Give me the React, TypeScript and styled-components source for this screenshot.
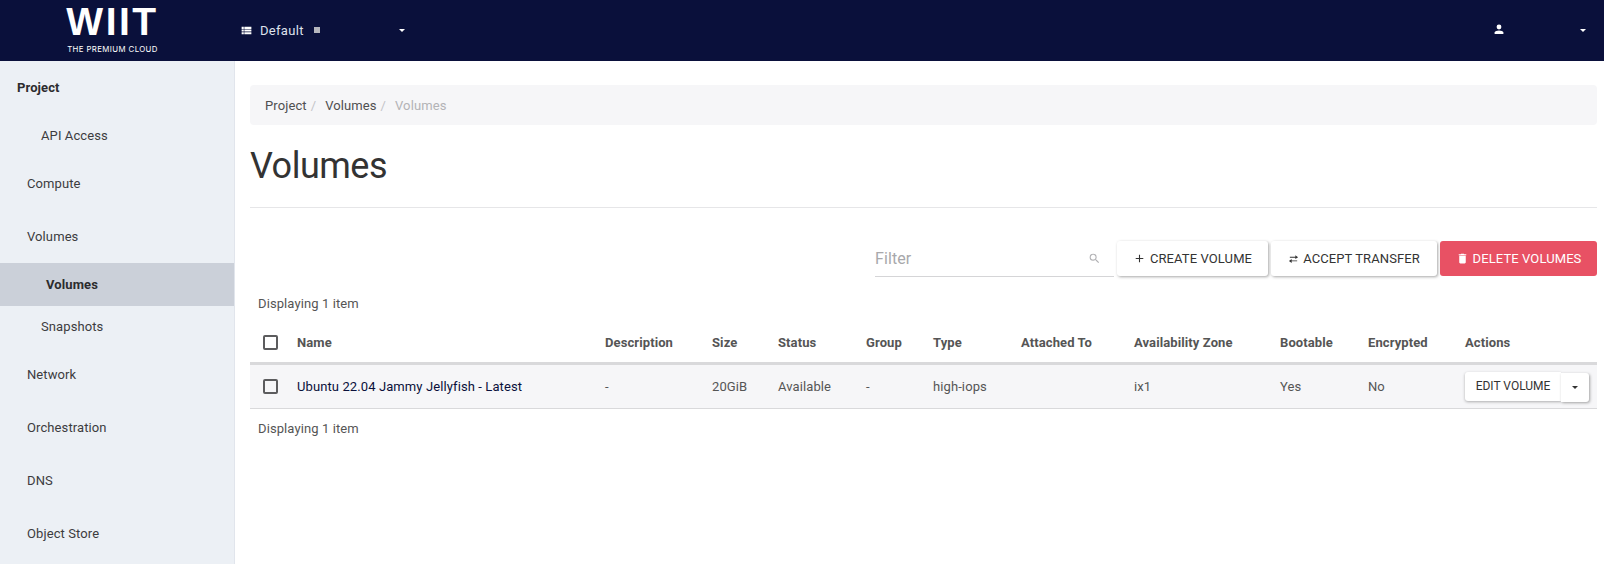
import React from "react";
import styled, { createGlobalStyle } from "styled-components";
import { MdViewList, MdAdd, MdDelete, MdSearch } from "react-icons/md";

const Global = createGlobalStyle`
  html, body { margin: 0; padding: 0; background: #fff; height: 564px; overflow: hidden; }
  body { font-family: Roboto, "Liberation Sans", sans-serif; font-size: 13px; color: #333; letter-spacing: 0.1px; }
  * { box-sizing: border-box; }
`;

const Page = styled.div`
  width: 1604px; height: 564px; display: flex; flex-direction: column; overflow: hidden;
`;
const TopBar = styled.header`
  height: 61px; flex: none; background: #0a103b; color: #fff; display: flex; align-items: center;
`;
const LogoSlot = styled.div`
  width: 235px; flex: none; display: flex; justify-content: center; padding-right: 10px;
`;
const Logo = styled.div`
  display: flex; flex-direction: column; align-items: center; width: 92px;
`;
const LogoMark = styled.div`
  font-family: "Liberation Sans", sans-serif; font-weight: 700; font-size: 39px; line-height: 34px; height: 34px; letter-spacing: 2.5px;
  margin-top: -2px;
`;
const LogoTag = styled.div`
  font-family: Inter, sans-serif; font-weight: 400; font-size: 7.8px; line-height: 9px; letter-spacing: 0.4px; margin-top: 6px; white-space: nowrap;
`;
const ProjectPicker = styled.div`
  display: flex; align-items: center; width: 170px; padding: 0 0 1px 5px;
`;
const PickerLabel = styled.span`
  margin-left: 7px; font-size: 13px; letter-spacing: 0.3px; color: #dfe2ec;
`;
const StatusSquare = styled.span`
  width: 6px; height: 6px; background: #b5b6bd; margin-left: 10px;
`;
const Caret = styled.span<{ $color?: string; $ml?: string }>`
  width: 0; height: 0; border-left: 3px solid transparent; border-right: 3px solid transparent;
  border-top: 3px solid ${(p) => p.$color ?? "#fff"}; margin-left: ${(p) => p.$ml ?? "auto"};
`;
const UserMenu = styled.div`
  margin-left: auto; margin-right: 18px; width: 94px; display: flex; align-items: center; padding-bottom: 1px;
`;
const Body = styled.div`
  flex: 1; display: flex; min-height: 0;
`;
const Sidebar = styled.nav`
  width: 235px; flex: none; background: #ecf0f5; border-right: 1px solid #e1e5ec; display: flex; flex-direction: column;
  color: #3a3a3c;
`;
const SideItem = styled.div<{ $h: number; $indent: number; $bold?: boolean; $active?: boolean }>`
  height: ${(p) => p.$h}px; line-height: ${(p) => p.$h}px; padding-left: ${(p) => p.$indent}px; flex: none;
  font-weight: ${(p) => (p.$bold ? 700 : 400)};
  color: ${(p) => (p.$bold ? "#2c2c2e" : "#3c3c3e")};
  background: ${(p) => (p.$active ? "#cbd0d9" : "transparent")};
`;
const Main = styled.main`
  flex: 1; padding: 24px 7px 0 15px; min-width: 0;
`;
const Crumbs = styled.div`
  height: 40px; background: #f6f6f8; border-radius: 4px; display: flex; align-items: center; padding-left: 15px; color: #4f4f51;
`;
const CrumbSep = styled.span`
  color: #c3c4c8; margin: 0 9px 0 4px;
`;
const CrumbCurrent = styled.span`
  color: #b3b3b6;
`;
const Title = styled.h1`
  margin: 21px 0 0; font-size: 36px; line-height: 40px; font-weight: 400; color: #333; letter-spacing: -0.5px; height: 61px;
`;
const Rule = styled.hr`
  margin: 0; border: 0; border-top: 1px solid #e6e6e8;
`;
const Toolbar = styled.div`
  display: flex; justify-content: flex-end; align-items: flex-start; gap: 3px; margin-top: 33px; height: 36px;
`;
const Filter = styled.div`
  width: 239px; height: 36px; border-bottom: 1px solid #d5d5d7; display: flex; align-items: center; justify-content: space-between;
  font-size: 16px; color: #a8a8ab; padding-right: 13px; letter-spacing: 0.1px;
`;
const ToolButton = styled.button<{ $w: number; $danger?: boolean }>`
  width: ${(p) => p.$w}px; height: 35px; border: 0; border-radius: 3px; display: flex; align-items: center; justify-content: center; gap: 4px;
  background: ${(p) => (p.$danger ? "#e85164" : "#fff")};
  color: ${(p) => (p.$danger ? "#fff" : "#333")};
  font: 400 13px Roboto, sans-serif; letter-spacing: 0.1px; padding: 0;
  box-shadow: ${(p) => (p.$danger ? "none" : "1px 1px 3px rgba(0,0,0,.35)")};
`;
const Count = styled.div`
  height: 20px; line-height: 20px; padding-left: 8px; font-size: 13px; color: #555;
`;
const TopCount = styled(Count)`
  margin-top: 17px;
`;
const BottomCount = styled(Count)`
  margin-top: 10px;
`;
const Table = styled.table`
  width: 100%; table-layout: fixed; border-collapse: collapse; margin-top: 9px;
`;
const Th = styled.th`
  height: 40px; padding: 0 0 0 8px; text-align: left; font-weight: 700; font-size: 13px; color: #555; border-bottom: 3px solid #d9d9db;
`;
const Td = styled.td`
  height: 45px; padding: 0 0 0 8px; font-size: 13px; color: #555; background: #f6f6f8; border-bottom: 1px solid #d9d9db;
`;
const NameLink = styled.a`
  color: #0a103b;
`;
const Check = styled.span`
  display: block; width: 15px; height: 15px; border: 2px solid #5c5c5e; border-radius: 2px; margin-left: 5px;
`;
const ActionGroup = styled.div`
  display: flex; align-items: center;
`;
const EditButton = styled.button`
  width: 96px; height: 29px; border: 0; border-radius: 3px 0 0 3px; background: #fff; color: #333; padding: 0;
  font: 400 12px Roboto, sans-serif; letter-spacing: 0; box-shadow: 0 1px 3px rgba(0,0,0,.3);
`;
const MoreButton = styled.button`
  width: 28px; height: 29px; margin-top: 2px; border: 0; border-radius: 0 3px 3px 0; background: #fff; padding: 0; display: flex; align-items: center; justify-content: center;
  box-shadow: 1px 1px 3px rgba(0,0,0,.35);
`;

const SwapIcon = () => (
  <svg width="11" height="10" viewBox="0 0 12 10" fill="#333">
    <path d="M2 2.6h6V1l3 2-3 2V3.5H2z" />
    <path d="M10 6.5H4V5L1 7.2 4 9.3V7.4h6z" />
  </svg>
);

const PersonIcon = () => (
  <svg width="14" height="14" viewBox="0 0 14 14" fill="#fff">
    <circle cx="7" cy="4" r="2.4" />
    <path d="M2.6 11V9.6C2.6 8.3 5 7.6 7 7.6s4.4.7 4.4 2V11z" />
  </svg>
);

const widths = [39, 308, 107, 66, 88, 67, 88, 113, 146, 88, 97, 140];
const heads = ["Name", "Description", "Size", "Status", "Group", "Type", "Attached To", "Availability Zone", "Bootable", "Encrypted", "Actions"];
const cells = ["-", "20GiB", "Available", "-", "high-iops", "", "ix1", "Yes", "No"];

const nav: { t: string; h: number; i: number; bold?: boolean; active?: boolean }[] = [
  { t: "Project", h: 53, i: 17, bold: true },
  { t: "API Access", h: 43, i: 41 },
  { t: "Compute", h: 53, i: 27 },
  { t: "Volumes", h: 53, i: 27 },
  { t: "Volumes", h: 43, i: 46, bold: true, active: true },
  { t: "Snapshots", h: 42, i: 41 },
  { t: "Network", h: 53, i: 27 },
  { t: "Orchestration", h: 53, i: 27 },
  { t: "DNS", h: 53, i: 27 },
  { t: "Object Store", h: 53, i: 27 },
];

export default function App() {
  return (
    <Page>
      <Global />
      <TopBar>
        <LogoSlot>
          <Logo>
            <LogoMark>WIIT</LogoMark>
            <LogoTag>THE PREMIUM CLOUD</LogoTag>
          </Logo>
        </LogoSlot>
        <ProjectPicker>
          <MdViewList size={13} color="#fff" />
          <PickerLabel>Default</PickerLabel>
          <StatusSquare />
          <Caret />
        </ProjectPicker>
        <UserMenu>
          <PersonIcon />
          <Caret />
        </UserMenu>
      </TopBar>
      <Body>
        <Sidebar>
          {nav.map((n, i) => (
            <SideItem key={i} $h={n.h} $indent={n.i} $bold={n.bold} $active={n.active}>{n.t}</SideItem>
          ))}
        </Sidebar>
        <Main>
          <Crumbs>
            Project<CrumbSep>/</CrumbSep>Volumes<CrumbSep>/</CrumbSep><CrumbCurrent>Volumes</CrumbCurrent>
          </Crumbs>
          <Title>Volumes</Title>
          <Rule />
          <Toolbar>
            <Filter>Filter<MdSearch size={13} color="#b0b0b3" /></Filter>
            <ToolButton $w={151}><MdAdd size={13} />CREATE VOLUME</ToolButton>
            <ToolButton $w={166}><SwapIcon />ACCEPT TRANSFER</ToolButton>
            <ToolButton $w={157} $danger><MdDelete size={13} />DELETE VOLUMES</ToolButton>
          </Toolbar>
          <TopCount>Displaying 1 item</TopCount>
          <Table>
            <colgroup>{widths.map((w, i) => <col key={i} style={{ width: w }} />)}</colgroup>
            <thead>
              <tr>
                <Th><Check /></Th>
                {heads.map((h) => <Th key={h}>{h}</Th>)}
              </tr>
            </thead>
            <tbody>
              <tr>
                <Td><Check /></Td>
                <Td><NameLink>Ubuntu 22.04 Jammy Jellyfish - Latest</NameLink></Td>
                {cells.map((c, i) => <Td key={i}>{c}</Td>)}
                <Td>
                  <ActionGroup>
                    <EditButton>EDIT VOLUME</EditButton>
                    <MoreButton><Caret $color="#333" $ml="0" /></MoreButton>
                  </ActionGroup>
                </Td>
              </tr>
            </tbody>
          </Table>
          <BottomCount>Displaying 1 item</BottomCount>
        </Main>
      </Body>
    </Page>
  );
}
